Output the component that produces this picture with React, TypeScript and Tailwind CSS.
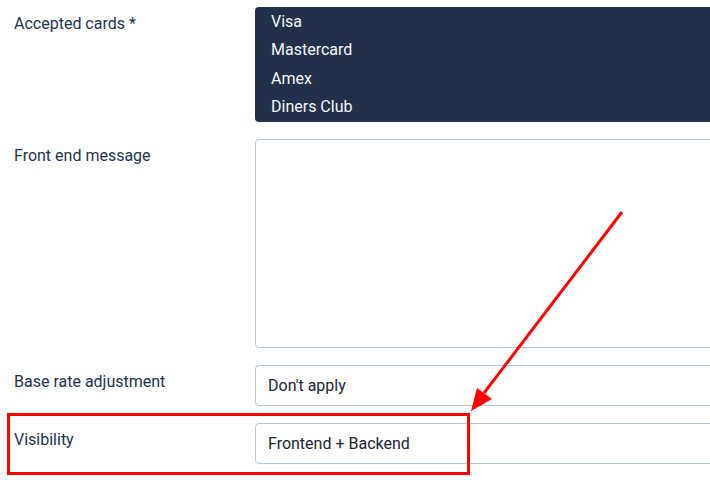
const cards = ["Visa", "Mastercard", "Amex", "Diners Club"]

const Label = ({ children }: { children: React.ReactNode }) => (
  <div className="w-[255px] shrink-0 pl-[14px] pt-[5px] text-[16px] leading-6 text-[#1f3350]">{children}</div>
)

const App = () => {
  return (
    <div className="relative w-[710px] h-[490px] overflow-hidden bg-white" style={{ fontFamily: "Roboto, 'Liberation Sans', sans-serif" }}>
      <div className="flex flex-col gap-[17px] pt-[7px]">
        <div className="flex">
          <Label>Accepted cards *</Label>
          <div className="w-[480px] shrink-0 h-[115px] rounded-l-[4px] bg-[#22304a] py-[0.5px]">
            {cards.map((c) => (
              <div key={c} className="h-[28.5px] pl-4 text-[16px] leading-[28.5px] text-[#f4f6f9]">
                {c}
              </div>
            ))}
          </div>
        </div>

        <div className="flex">
          <Label>Front end message</Label>
          <div className="w-[480px] shrink-0 h-[209px] rounded-[4px] border border-[#b7c5de] bg-white" />
        </div>

        <div className="flex">
          <Label>Base rate adjustment</Label>
          <div className="w-[480px] shrink-0 h-[41px] rounded-[4px] border border-[#b7c5de] bg-white flex items-center pl-[12px] text-[16px] text-[#1c2434]">
            Don't apply
          </div>
        </div>

        <div className="flex">
          <Label>Visibility</Label>
          <div className="w-[480px] shrink-0 h-[41px] rounded-[4px] border border-[#b7c5de] bg-white flex items-center pl-[12px] text-[16px] text-[#1c2434]">
            Frontend + Backend
          </div>
        </div>
      </div>

      {/* highlight box */}
      <div className="absolute left-[7px] top-[413px] w-[463px] h-[62px] border-[3px] border-[#ff0000]" />

      {/* arrow */}
      <svg className="absolute left-0 top-0" width="710" height="490" viewBox="0 0 710 490">
        <line x1="622" y1="212" x2="484" y2="393" stroke="#ff0000" strokeWidth="3" />
        <polygon points="471,411 477,388 492,399" fill="#ff0000" />
      </svg>
    </div>
  )
}

export default App
